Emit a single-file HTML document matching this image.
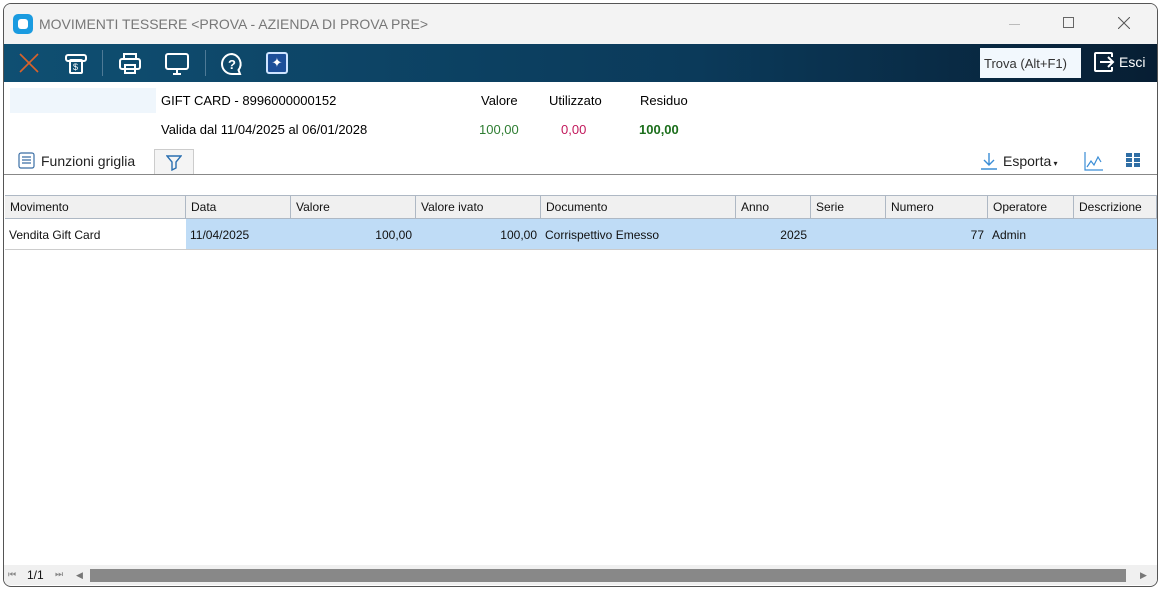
<!DOCTYPE html>
<html><head><meta charset="utf-8"><style>
*{margin:0;padding:0;box-sizing:border-box}
body{width:1159px;height:589px;background:#fff;font-family:"Liberation Sans",sans-serif;position:relative;overflow:hidden}
.win{position:absolute;left:3px;top:3px;width:1155px;height:584px;border:1px solid #555;border-radius:8px;overflow:hidden;background:#fff}
.title{position:absolute;left:0;top:0;width:100%;height:40px;background:#f3f3f3;font-size:14px;color:#777}
.tb{position:absolute;left:0;top:40px;width:100%;height:38px;background:linear-gradient(90deg,#0f4f72 0%,#0b3a5a 60%,#071e33 100%)}
.a{position:absolute;white-space:nowrap}
.f13{font-size:13px}
.grid{position:absolute;left:1px;top:191px;width:1152px}
.hd{position:absolute;top:0;height:24px;background:#f0f0f0;border-top:1px solid #aeb8c4;border-bottom:1px solid #aeb8c4;width:1152px}
.c{position:absolute;top:0;height:100%;border-right:1px solid #aeb8c4;font-size:12px;padding:4px 5px;color:#111}
.r{position:absolute;top:24px;height:31px;width:1152px;border-bottom:1px solid #ccc}
.rc{position:absolute;top:0;height:30px;font-size:12px;padding:9px 4px;color:#111}
</style></head><body>
<div class="win">
<div class="title">
<div class="a" style="left:9px;top:10px;width:20px;height:20px;background:#1a9be0;border-radius:5px"><div style="margin:5px;width:10px;height:10px;background:#fff;border-radius:3px"></div></div>
<div class="a" style="left:35px;top:12px">MOVIMENTI TESSERE &lt;PROVA - AZIENDA DI PROVA PRE&gt;</div>
<div class="a" style="left:1005px;top:20px;width:11px;height:1px;background:#bbb"></div>
<div class="a" style="left:1059px;top:13px;width:11px;height:11px;border:1px solid #666"></div>
<svg class="a" style="left:1114px;top:13px" width="12" height="12" viewBox="0 0 12 12" stroke="#555" stroke-width="1"><path d="M0 0L12 12M12 0L0 12"/></svg>
</div>
<div class="tb">
<svg class="a" style="left:15px;top:9px" width="20" height="20" viewBox="0 0 20 20" stroke="#d9622b" stroke-width="1.6"><path d="M1 1L19 19M19 1L1 19"/></svg>
<svg class="a" style="left:60px;top:9px" width="24" height="22" viewBox="0 0 24 22" fill="none" stroke="#fff" stroke-width="2"><rect x="2" y="2" width="20" height="6" rx="2"/><rect x="6" y="7" width="12" height="13" rx="1"/><text x="9" y="17" font-size="9" fill="#fff" stroke="none">$</text></svg>
<div class="a" style="left:98px;top:6px;width:1px;height:26px;background:#4e7a96"></div>
<svg class="a" style="left:114px;top:8px" width="24" height="24" viewBox="0 0 24 24" fill="none" stroke="#fff" stroke-width="2"><rect x="6" y="2" width="12" height="5"/><rect x="2" y="7" width="20" height="10" rx="2"/><rect x="7" y="13" width="10" height="8"/></svg>
<svg class="a" style="left:160px;top:8px" width="26" height="24" viewBox="0 0 26 24" fill="none" stroke="#fff" stroke-width="2"><rect x="2" y="2" width="22" height="15" rx="2"/><path d="M9 22h8M13 17v5"/></svg>
<div class="a" style="left:201px;top:6px;width:1px;height:26px;background:#4e7a96"></div>
<svg class="a" style="left:216px;top:8px" width="24" height="24" viewBox="0 0 24 24" fill="none" stroke="#fff" stroke-width="2"><path d="M12 2a10 10 0 1 0 0 20h8l-1.5-4A10 10 0 0 0 12 2z"/><text x="8" y="17" font-size="13" fill="#fff" stroke="none" font-weight="bold">?</text></svg>
<div class="a" style="left:262px;top:8px;width:22px;height:22px;background:#1d4f99;border:2px solid #cfe4ff;border-radius:3px;color:#fff;font-size:13px;text-align:center;line-height:18px">✦</div>
<div class="a" style="left:976px;top:4px;width:101px;height:30px;background:#f2f8fd;font-size:13px;color:#333;padding:8px 4px">Trova (Alt+F1)</div>
<svg class="a" style="left:1089px;top:7px" width="22" height="22" viewBox="0 0 22 22" fill="none" stroke="#fff" stroke-width="2"><path d="M8 2H3a1 1 0 0 0-1 1v16a1 1 0 0 0 1 1h5M8 2h10a1 1 0 0 1 1 1v3M19 16v3a1 1 0 0 1-1 1H8"/><path d="M7 11h13M15 6l5 5-5 5"/></svg>
<div class="a" style="left:1115px;top:10px;font-size:14px;color:#fff">Esci</div>
</div>
<div class="a" style="left:6px;top:84px;width:146px;height:25px;background:#eff6fc"></div>
<div class="a f13" style="left:157px;top:89px">GIFT CARD - 8996000000152</div>
<div class="a f13" style="left:157px;top:118px">Valida dal 11/04/2025 al 06/01/2028</div>
<div class="a f13" style="left:477px;top:89px">Valore</div>
<div class="a f13" style="left:545px;top:89px">Utilizzato</div>
<div class="a f13" style="left:636px;top:89px">Residuo</div>
<div class="a f13" style="left:475px;top:118px;color:#2e7d32">100,00</div>
<div class="a f13" style="left:557px;top:118px;color:#c2185b">0,00</div>
<div class="a f13" style="left:635px;top:118px;color:#1b6e1b;font-weight:bold">100,00</div>
<svg class="a" style="left:14px;top:148px" width="17" height="17" viewBox="0 0 17 17" fill="none" stroke="#3a6ea5" stroke-width="1.2"><rect x="1" y="1" width="15" height="15" rx="2"/><path d="M4 5h9M4 8h9M4 11h9"/></svg>
<div class="a" style="left:37px;top:149px;font-size:14px;color:#222">Funzioni griglia</div>
<div class="a" style="left:150px;top:145px;width:40px;height:26px;background:#f4f4f4;border:1px solid #ccc;border-bottom:none"></div>
<svg class="a" style="left:162px;top:150px" width="16" height="17" viewBox="0 0 16 17" fill="none" stroke="#2a6fb0" stroke-width="1.4"><path d="M1 2h14l-5 6v6l-4 2V8z"/></svg>
<svg class="a" style="left:976px;top:148px" width="18" height="18" viewBox="0 0 18 18" fill="none" stroke="#3a8dd6" stroke-width="1.4"><path d="M9 1v12M4 8l5 5 5-5M1 17h16"/></svg>
<div class="a" style="left:999px;top:149px;font-size:14px;color:#222">Esporta<span style="font-size:8px"> ▾</span></div>
<svg class="a" style="left:1080px;top:147px" width="20" height="20" viewBox="0 0 20 20" fill="none" stroke="#3a8dd6" stroke-width="1.2"><path d="M1 1v18h18M3 16l4-6 3 4 4-8 3 5"/></svg>
<svg class="a" style="left:1122px;top:149px" width="16" height="16"><g fill="#2f6ea5"><rect x="0" y="0" width="6" height="4"/><rect x="8" y="0" width="6" height="4"/><rect x="0" y="5" width="6" height="4"/><rect x="8" y="5" width="6" height="4"/><rect x="0" y="10" width="6" height="4"/><rect x="8" y="10" width="6" height="4"/></g></svg>
<div class="a" style="left:0;top:170px;width:1155px;height:1px;background:#888"></div>
<div class="grid">
<div class="hd">
<div class="c" style="left:0;width:181px">Movimento</div>
<div class="c" style="left:181px;width:105px">Data</div>
<div class="c" style="left:286px;width:125px">Valore</div>
<div class="c" style="left:411px;width:125px">Valore ivato</div>
<div class="c" style="left:536px;width:195px">Documento</div>
<div class="c" style="left:731px;width:75px">Anno</div>
<div class="c" style="left:806px;width:75px">Serie</div>
<div class="c" style="left:881px;width:102px">Numero</div>
<div class="c" style="left:983px;width:86px">Operatore</div>
<div class="c" style="left:1069px;width:83px">Descrizione</div>
</div>
<div class="r">
<div class="rc" style="left:0;width:181px">Vendita Gift Card</div>
<div style="position:absolute;left:181px;top:0;width:971px;height:30px;background:#bfdcf6"></div>
<div class="rc" style="left:181px;width:105px">11/04/2025</div>
<div class="rc" style="left:286px;width:125px;text-align:right">100,00</div>
<div class="rc" style="left:411px;width:125px;text-align:right">100,00</div>
<div class="rc" style="left:536px;width:195px">Corrispettivo Emesso</div>
<div class="rc" style="left:731px;width:75px;text-align:right">2025</div>
<div class="rc" style="left:881px;width:102px;text-align:right">77</div>
<div class="rc" style="left:983px;width:86px">Admin</div>
</div>
</div>
<div class="a" style="left:0;top:561px;width:1155px;height:20px;background:#f0f0f0"></div>
<div class="a" style="left:4px;top:565px;font-size:9px;color:#888">⏮</div>
<div class="a" style="left:23px;top:564px;font-size:12px;color:#111">1/1</div>
<div class="a" style="left:51px;top:565px;font-size:9px;color:#888">⏭</div>
<div class="a" style="left:67px;top:561px;width:19px;height:20px;background:#f0f0f0;font-size:9px;color:#777;padding:5px">◀</div>
<div class="a" style="left:86px;top:565px;width:1036px;height:13px;background:#888"></div>
<div class="a" style="left:1136px;top:566px;font-size:9px;color:#777">▶</div>
</div>
</body></html>
